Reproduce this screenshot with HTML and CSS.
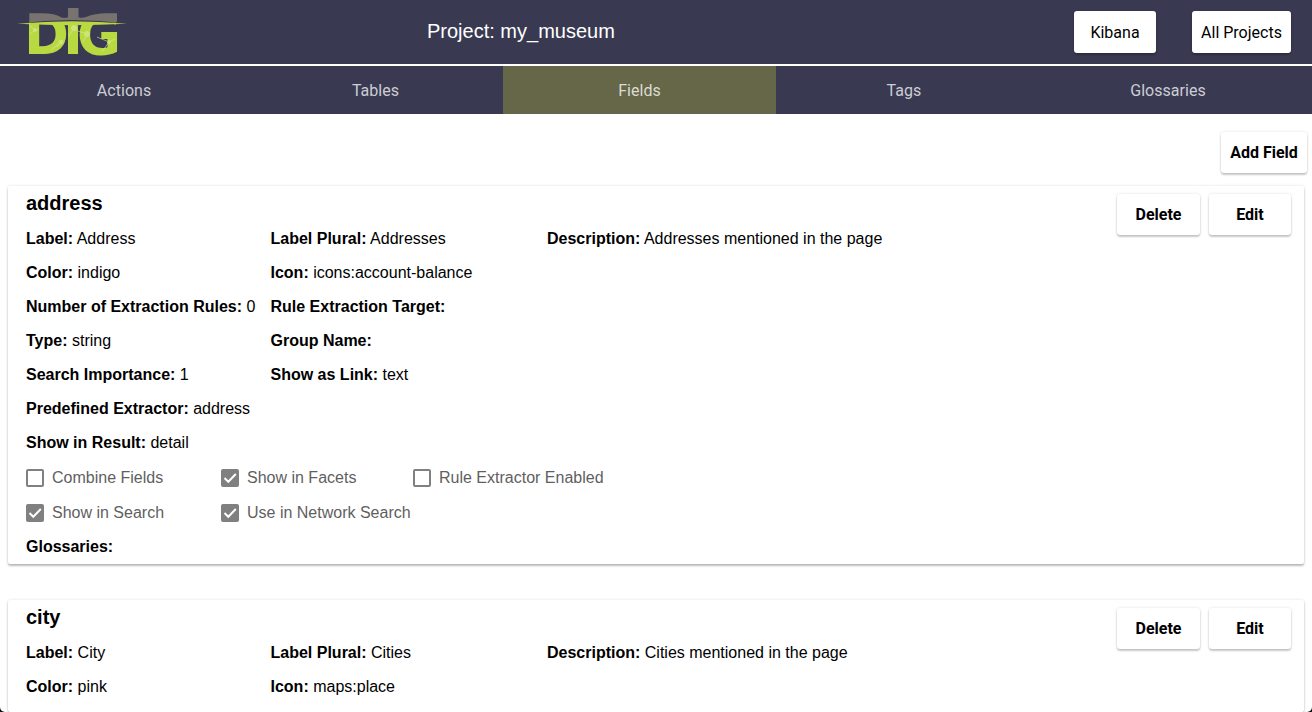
FILE: index.html
```html
<!DOCTYPE html>
<html lang="en">
<head>
<meta charset="utf-8">
<title>my_museum</title>
<link rel="stylesheet" href="styles.css">
</head>
<body>
<header class="topbar">
  <svg class="logo" viewBox="0 0 110 50" width="110" height="50" role="img" aria-label="DIG">
    <g fill="#b9d941" class="logo-text">
      <text x="7" y="45.500" textLength="45" lengthAdjust="spacingAndGlyphs">D</text>
      <text x="60" y="45.500" textLength="44" lengthAdjust="spacingAndGlyphs">G</text>
      <rect x="51" y="14" width="10" height="32"/>
    </g>
    <path d="M0 0H110V14H0Z" fill="#393a52"/>
    <path d="M12.300 5.300H25Q38 5.500 44 9.300Q47.500 10.500 51 9.300V0H61.500V9.300Q65 10.500 69 9Q78 5.300 90 5.300H100V14H12.300Z" fill="#78736f"/>
    <path d="M0 15.600Q55 8.600 110 15.600Z" fill="#393a52"/>
    <path d="M0 15.800Q55 10.800 110 15.800Q55 18.500 0 15.800Z" fill="#b9d941"/>
    <g stroke="#dceca0" stroke-width="1" opacity=".6" fill="#dceca0">
      <path d="M13 18L18 22L13 26M18 22L22 21M34 42L44 34L40 39M52 28L57 20L61 23L70 26L66 34M80 29L92 34L98 31M92 34L85 44" fill="none"/>
      <circle cx="18" cy="22" r="1.500"/><circle cx="44" cy="34" r="2"/><circle cx="57" cy="20" r="2.500"/><circle cx="70" cy="26" r="2.500"/><circle cx="92" cy="34" r="1.500"/>
    </g>
  </svg>
  <h1 class="project">Project: my_museum</h1>
  <div class="top-actions">
    <button class="btn kibana">Kibana</button>
    <button class="btn projects">All Projects</button>
  </div>
</header>
<nav class="tabs">
  <a class="tab actions">Actions</a>
  <a class="tab tables">Tables</a>
  <a class="tab fields active">Fields</a>
  <a class="tab tags">Tags</a>
  <a class="tab glossaries">Glossaries</a>
</nav>
<main class="content">
  <div class="toolbar"><button class="btn strong add">Add Field</button></div>
  <section class="card">
    <div class="card-actions"><button class="btn strong delete">Delete</button><button class="btn strong edit">Edit</button></div>
    <h2>address</h2>
    <div class="props">
      <p><b>Label:</b> Address</p><p><b>Label Plural:</b> Addresses</p><p><b>Description:</b> Addresses mentioned in the page</p>
      <p><b>Color:</b> indigo</p><p class="wide"><b>Icon:</b> icons:account-balance</p>
      <p><b>Number of Extraction Rules:</b> 0</p><p class="wide"><b>Rule Extraction Target:</b></p>
      <p><b>Type:</b> string</p><p class="wide"><b>Group Name:</b></p>
      <p><b>Search Importance:</b> 1</p><p class="wide"><b>Show as Link:</b> text</p>
      <p class="full"><b>Predefined Extractor:</b> address</p>
      <p class="full"><b>Show in Result:</b> detail</p>
    </div>
    <div class="checks">
      <span class="check"><i class="box"></i>Combine Fields</span>
      <span class="check"><i class="box on"><svg viewBox="0 0 18 18"><path d="M3.500 9L7.300 12.800L14.800 5"/></svg></i>Show in Facets</span>
      <span class="check"><i class="box"></i>Rule Extractor Enabled</span>
      <span class="check"><i class="box on"><svg viewBox="0 0 18 18"><path d="M3.500 9L7.300 12.800L14.800 5"/></svg></i>Show in Search</span>
      <span class="check"><i class="box on"><svg viewBox="0 0 18 18"><path d="M3.500 9L7.300 12.800L14.800 5"/></svg></i>Use in Network Search</span>
    </div>
    <p class="glossary"><b>Glossaries:</b></p>
  </section>
  <section class="card last">
    <div class="card-actions"><button class="btn strong delete">Delete</button><button class="btn strong edit">Edit</button></div>
    <h2>city</h2>
    <div class="props">
      <p><b>Label:</b> City</p><p><b>Label Plural:</b> Cities</p><p><b>Description:</b> Cities mentioned in the page</p>
      <p><b>Color:</b> pink</p><p class="wide"><b>Icon:</b> maps:place</p>
    </div>
  </section>
</main>
</body>
</html>
```
FILE: styles.css
```css
* { box-sizing: border-box; }
html { height: 100%; overflow: hidden; background: #111; }
body { margin: 0; height: 712px; overflow: hidden; background: #fff; border-radius: 0 0 5px 5px; color: #000; font: 16px/34px "Liberation Sans", Arial, sans-serif; }
p, h1, h2 { margin: 0; }
.topbar { display: grid; grid-template-columns: 427px 1fr auto; height: 64px; background: #393a52; }
.logo { margin: 8px 0 0 17px; overflow: visible; }
.logo-text { font: bold 56px "DejaVu Sans", sans-serif; }
.project { color: #fff; font-size: 20px; font-weight: 400; line-height: 63px; }
.top-actions { display: flex; gap: 36px; padding: 11px 21px 0 0; }
.btn { height: 42px; padding: 1px 0 0; border: 0; border-radius: 3px; background: #fff; color: #000; font: 16px/42px Roboto, sans-serif; letter-spacing: 0; white-space: nowrap; box-shadow: 0 2px 2px rgba(0,0,0,.2), 0 0 3px rgba(0,0,0,.12); }
.strong { height: 41px; padding: 0; font-weight: 700; }
.kibana { width: 82px; }
.projects { width: 99px; }
.tabs { display: flex; height: 50px; border-top: 2px solid #fff; background: #393a52; padding-right: 8px; }
.tab { color: #cdcdd3; font: 16px/50px Roboto, sans-serif; height: 48px; letter-spacing: .04px; text-align: center; }
.actions { width: 248px; }
.tables { width: 255px; }
.fields { width: 273px; }
.tags { width: 256px; }
.glossaries { width: 272px; }
.active { background: #656748; color: #dcdcd2; }
.content { display: flex; flex-direction: column; height: 598px; }
.toolbar { display: flex; flex: none; justify-content: flex-end; height: 72px; padding: 18px 5px 0 0; }
.add { width: 86px; }
.card { position: relative; flex: none; height: 378px; margin: 0 8px 36px; padding: 0 18px; border-radius: 2px; box-shadow: 0 2px 2px rgba(0,0,0,.24), 0 0 3px rgba(0,0,0,.12); }
.last { flex: 1; height: auto; margin-bottom: 0; }
.card-actions { position: absolute; top: 8px; right: 13px; display: flex; gap: 9px; }
.delete { width: 83px; }
.edit { width: 82px; }
.card h2 { font-size: 20px; line-height: 34px; padding-bottom: 2px; }
.props { display: grid; grid-template-columns: 244.500px 276.500px 1fr; grid-auto-rows: 34px; white-space: nowrap; }
.wide { grid-column: 2 / 4; }
.full { grid-column: 1 / 4; }
.checks { display: grid; grid-template-columns: 195px 192px 1fr; grid-auto-rows: 35px; color: #5f5f5f; white-space: nowrap; }
.check { display: flex; align-items: center; gap: 8px; }
.box { width: 18px; height: 18px; border: 2px solid #808080; border-radius: 2px; flex: none; }
.box.on { border: 0; background: #808080; }
.box svg { display: block; width: 18px; height: 18px; fill: none; stroke: #fff; stroke-width: 2; }
```
